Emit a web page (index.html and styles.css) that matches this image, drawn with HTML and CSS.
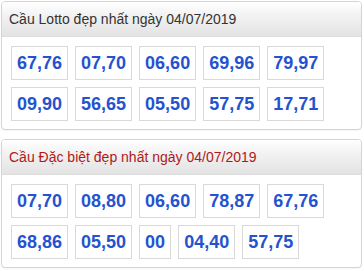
FILE: index.html
```html
<!DOCTYPE html>
<html>
<head>
<meta charset="utf-8">
<link rel="stylesheet" href="styles.css">
</head>
<body>
<div class="panel">
  <div class="panel-head">Cầu Lotto đẹp nhất ngày 04/07/2019</div>
  <div class="panel-body">
    <span class="num">67,76</span><span class="num">07,70</span><span class="num">06,60</span><span class="num">69,96</span><span class="num">79,97</span>
    <span class="num">09,90</span><span class="num">56,65</span><span class="num">05,50</span><span class="num">57,75</span><span class="num">17,71</span>
  </div>
</div>
<div class="panel">
  <div class="panel-head red">Cầu Đặc biệt đẹp nhất ngày 04/07/2019</div>
  <div class="panel-body">
    <span class="num">07,70</span><span class="num">08,80</span><span class="num">06,60</span><span class="num">78,87</span><span class="num">67,76</span>
    <span class="num">68,86</span><span class="num">05,50</span><span class="num">00</span><span class="num">04,40</span><span class="num">57,75</span>
  </div>
</div>
</body>
</html>
```
FILE: styles.css
```css
html, body {
  margin: 0;
  padding: 0;
  background: #fff;
}
body {
  padding: 1px 2px 0 1px;
  font-family: Arial, "Liberation Sans", sans-serif;
}
.panel {
  border: 1px solid #d4d4d4;
  border-radius: 4px;
  background: #fff;
  margin-bottom: 9px;
  overflow: hidden;
  box-shadow: 0 1px 1px rgba(0,0,0,0.04);
}
.panel-head {
  height: 34px;
  line-height: 34px;
  padding-left: 7px;
  font-size: 14px;
  color: #333;
  background: linear-gradient(to bottom, #ffffff 0%, #f2f2f2 40%, #e3e3e3 100%);
  border-bottom: 1px solid #dcdcdc;
}
.panel-head.red {
  color: #b0191b;
}
.panel-body {
  display: flex;
  flex-wrap: wrap;
  gap: 7px 7px;
  padding: 9px 9px 8px 9px;
}
.num {
  display: block;
  border: 1px solid #d9d9d9;
  padding: 0 5px;
  height: 32px;
  line-height: 32px;
  font-size: 18px;
  font-weight: bold;
  color: #2553cf;
  background: #fff;
}
```
